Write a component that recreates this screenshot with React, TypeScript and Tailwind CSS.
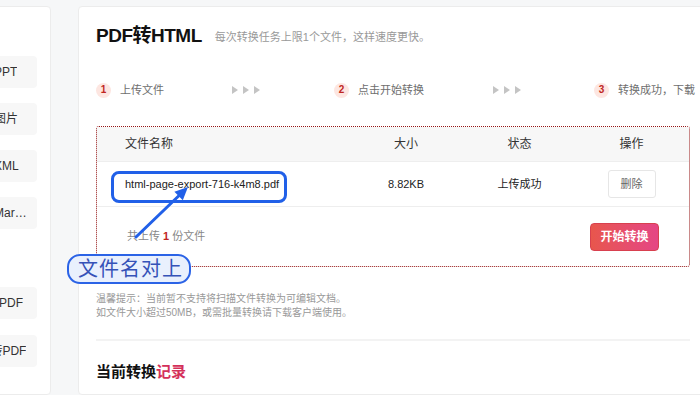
import React from 'react';

const sideTop = ['PDF转PPT', 'PDF转图片', 'PDF转XML', 'PDF转Markdown'];

function Arrows() {
  return (
    <svg width="30" height="10" viewBox="0 0 30 10" className="shrink-0">
      <polygon points="0,1 6,5 0,9" fill="#c4c4c4" />
      <polygon points="11,1 17,5 11,9" fill="#c4c4c4" />
      <polygon points="22,1 28,5 22,9" fill="#c4c4c4" />
    </svg>
  );
}

function Step({ n, label }: { n: number; label: string }) {
  return (
    <div className="flex items-center gap-[9px]">
      <span className="w-[15px] h-[15px] rounded-full bg-[#fde6e1] text-[#c0261f] text-[10px] font-bold flex items-center justify-center leading-none">
        {n}
      </span>
      <span className="text-[11px] text-[#6e6e6e] whitespace-nowrap">{label}</span>
    </div>
  );
}

export default function App() {
  return (
    <div className="relative w-[700px] h-[395px] overflow-hidden bg-[#f6f7f8] flex font-['Liberation_Sans','Noto_Sans_CJK_SC',sans-serif]">
      {/* Sidebar (scrolled off to the left) */}
      <aside className="shrink-0 -ml-[100px] w-[151px] mt-[6px] bg-white border border-[#ececec] rounded-[4px] pl-[10px] pr-[13px] pt-[49px]">
        <div className="flex flex-col gap-[15px]">
          {sideTop.map((t) => (
            <div key={t} className="h-[32px] rounded-[4px] bg-[#f7f7f7] pl-[47px] pr-[7px] flex items-center text-[12px] text-[#333]">
              <span className="truncate">{t}</span>
            </div>
          ))}
        </div>
        <div className="flex flex-col gap-[16px] mt-[58px]">
          <div className="h-[32px] rounded-[4px] bg-[#f7f7f7] pl-[52px] pr-[7px] flex items-center text-[12px] text-[#333]">
            <span className="truncate">图片转PDF</span>
          </div>
          <div className="h-[32px] rounded-[4px] bg-[#f7f7f7] pl-[51px] pr-[7px] flex items-center text-[12px] text-[#333]">
            <span className="truncate">Word转PDF</span>
          </div>
        </div>
      </aside>

      {/* Main card */}
      <main className="shrink-0 ml-[27px] w-[660px] mt-[6px] bg-white border border-[#ececec] rounded-[4px] pl-[17px] pt-[15px]">
        <div className="flex items-center h-[28px]">
          <h1 className="text-[19px] font-bold text-[#111] tracking-[-0.5px] leading-[28px]">PDF转HTML</h1>
          <span className="ml-[13px] text-[11px] text-[#999] mt-[3px]">每次转换任务上限1个文件，这样速度更快。</span>
        </div>

        {/* Steps */}
        <div className="flex items-center h-[20px] mt-[30px]">
          <div className="w-[136px]"><Step n={1} label="上传文件" /></div>
          <div className="w-[102px]"><Arrows /></div>
          <div className="w-[159px]"><Step n={2} label="点击开始转换" /></div>
          <div className="w-[101px]"><Arrows /></div>
          <div><Step n={3} label="转换成功，下载" /></div>
        </div>

        {/* Upload box */}
        <div className="mt-[26px] w-[594px] border border-dotted border-[#951717] rounded-[3px]">
          <div className="grid grid-cols-[259px_100px_127px_97px_1fr] h-[35px] items-center bg-[#f7f7f7] border-b border-[#eee] text-[12px] text-[#333]">
            <span className="pl-[28px]">文件名称</span>
            <span className="text-center">大小</span>
            <span className="text-center">状态</span>
            <span className="text-center">操作</span>
            <span />
          </div>
          <div className="grid grid-cols-[259px_100px_127px_97px_1fr] h-[45px] items-center border-b border-[#eee] text-[11px] text-[#222]">
            <span className="pl-[28px]">html-page-export-716-k4m8.pdf</span>
            <span className="text-center">8.82KB</span>
            <span className="text-center">上传成功</span>
            <span className="flex justify-center">
              <button className="w-[48px] h-[28px] border border-[#e6e6e6] rounded-[3px] text-[11px] text-[#666] bg-white">删除</button>
            </span>
            <span />
          </div>
          <div className="h-[59px] flex items-center justify-between pl-[30px] pr-[30px]">
            <span className="text-[11px] text-[#888]">
              共上传 <b className="text-[#c0261f]">1</b> 份文件
            </span>
            <button className="w-[69px] h-[28px] rounded-[4px] bg-gradient-to-r from-[#e8564c] to-[#e54584] text-white text-[12px] font-bold border border-[#d8404f]">
              开始转换
            </button>
          </div>
        </div>

        {/* Tips */}
        <div className="mt-[25px] text-[10px] leading-[14px] text-[#999]">
          <p>温馨提示：当前暂不支持将扫描文件转换为可编辑文档。</p>
          <p>如文件大小超过50MB，或需批量转换请下载客户端使用。</p>
        </div>

        <div className="mt-[19px] w-[594px] h-[2px] bg-[#f3f3f3]" />

        <h2 className="mt-[21px] text-[15px] font-bold leading-[20px] text-[#111]">
          当前转换<span className="text-[#d4305a]">记录</span>
        </h2>
      </main>

      {/* Annotation overlay */}
      <div className="absolute left-[111px] top-[171px] w-[176px] h-[32px] border-[3px] border-[#2160e8] rounded-[8px]" />
      <svg className="absolute left-0 top-0 pointer-events-none" width="700" height="395">
        <line x1="136" y1="237" x2="178.6" y2="196" stroke="#2160e8" strokeWidth="3" strokeLinecap="round" />
        <polygon points="188,187 182.8,200.3 174.4,191.7" fill="#2160e8" />
      </svg>
      <div className="absolute left-[67px] top-[254px] w-[124px] h-[30px] bg-[#e9f0fd] border-2 border-[#2b63e6] rounded-[13px] flex items-center pl-[9px] text-[20px] leading-none text-[#3552b8] tracking-[1px]">
        文件名对上
      </div>
    </div>
  );
}
